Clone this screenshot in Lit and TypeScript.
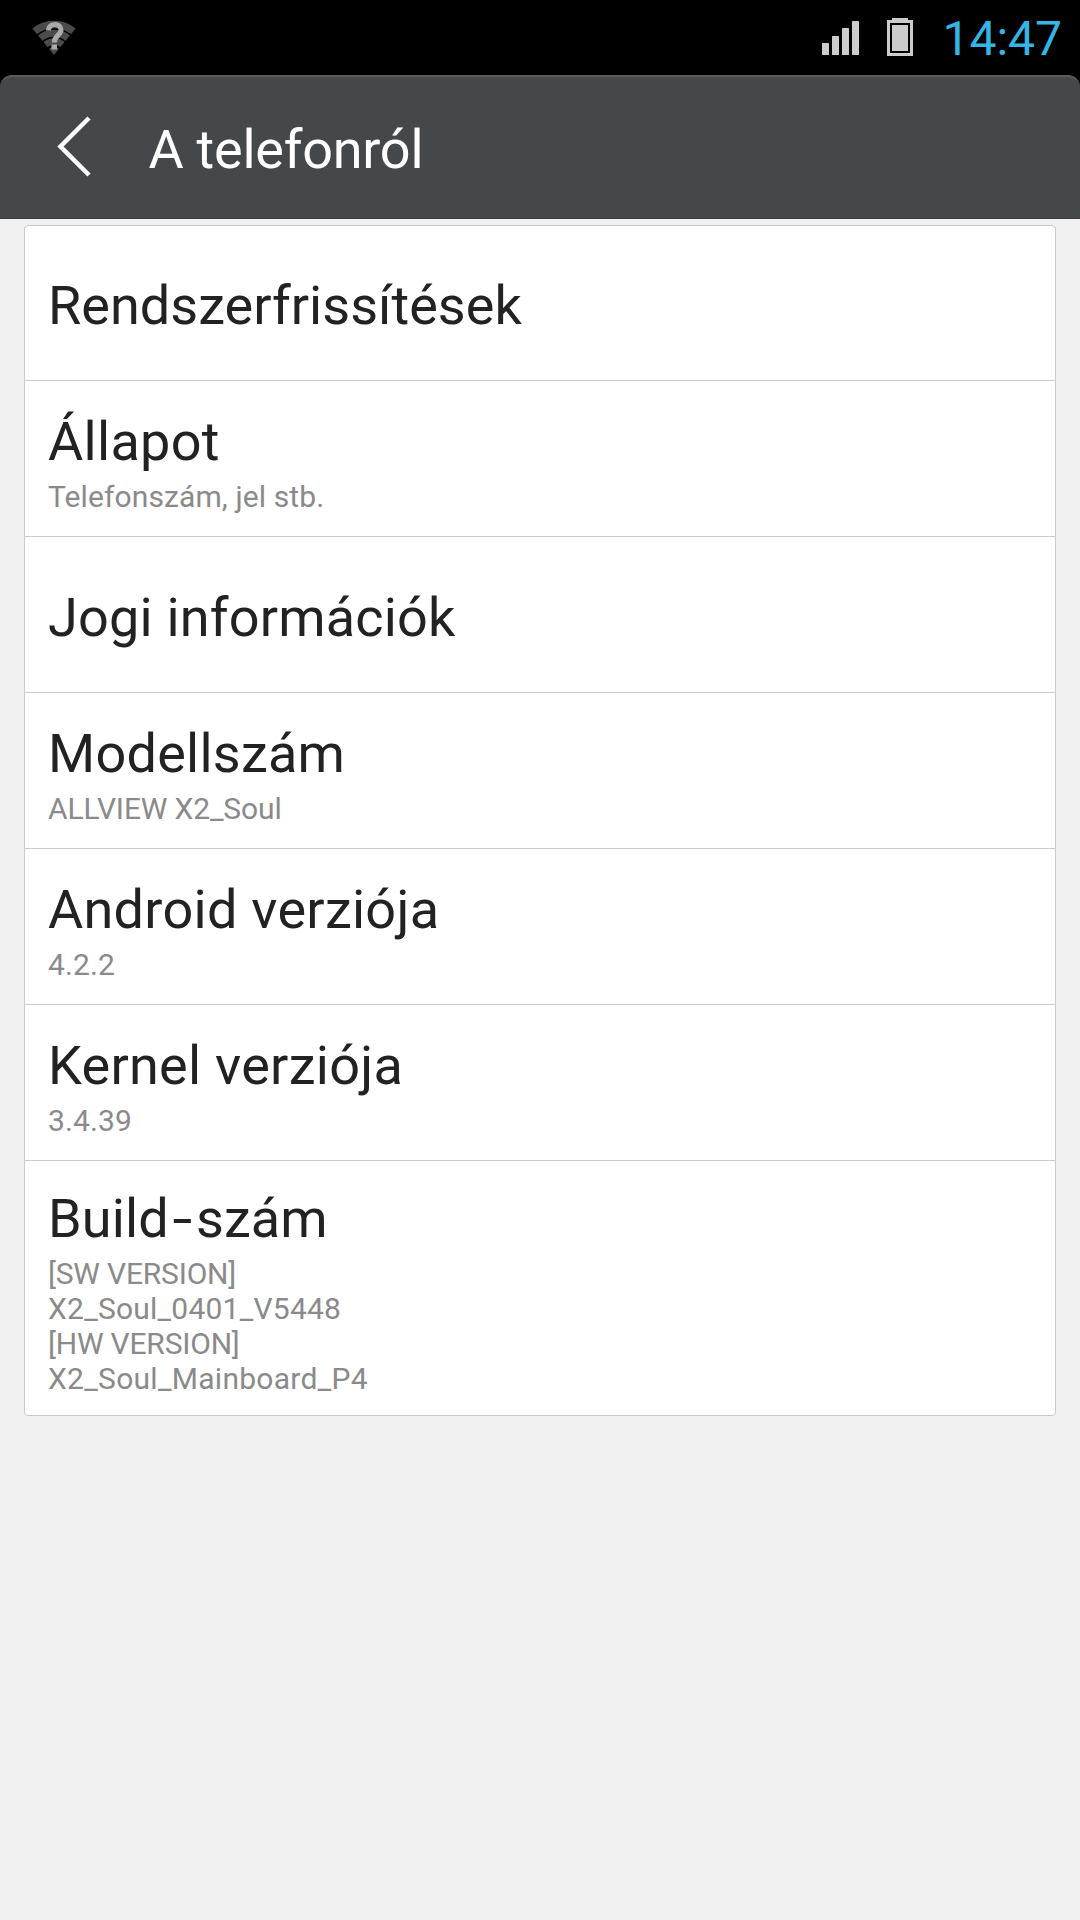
import { LitElement, html, css, svg } from "lit";
import { customElement } from "lit/decorators.js";

/** A run of text with its letter spacing in pixels. */
type Run = [text: string, spacing: number];
interface Row { title: Run; lines: Run[]; }

const ROWS: Row[] = [
  { title: ["Rendszerfrissítések", 0.03], lines: [] },
  { title: ["Állapot", 0.3], lines: [["Telefonszám, jel stb.", 0.11]] },
  { title: ["Jogi információk", 0.19], lines: [] },
  { title: ["Modellszám", 0.25], lines: [["ALLVIEW X2_Soul", -0.14]] },
  { title: ["Android verziója", 0.28], lines: [["4.2.2", 0.1]] },
  { title: ["Kernel verziója", 0.28], lines: [["3.4.39", 0.1]] },
  {
    title: ["Build-szám", 0.15],
    lines: [["[SW VERSION]", -0.2], ["X2_Soul_0401_V5448", 0.23], ["[HW VERSION]", -0.2], ["X2_Soul_Mainboard_P4", 0.28]],
  },
];

@customElement("app-root")
export class AppRoot extends LitElement {
  static styles = css`
    :host { display: block; height: 1920px; background: #f0f0f0; font-family: Roboto, "Noto Sans", sans-serif; }
    .top { background: #000; }
    .status { height: 75px; box-sizing: border-box; display: flex; align-items: center; padding: 0 18px 0 28px; }
    .signal { margin-left: auto; margin-right: 28px; }
    .battery { margin-right: 29px; }
    .clock { margin-top: 3px; color: #33b5e5; font-size: 48px; line-height: 56px; white-space: nowrap; }
    .bar { height: 144px; box-sizing: border-box; display: flex; align-items: center; background: #44484b; border-top: 2px solid #5a5e61; border-bottom: 1px solid #3a3e40; border-radius: 12px 12px 0 0; padding-left: 56px; }
    .back { margin-bottom: 3px; }
    .heading { margin: 4px 0 0 56.5px; font-size: 54px; line-height: 63px; font-weight: 400; letter-spacing: -0.25px; color: #fff; white-space: nowrap; }
    .card { margin: 6px 24px 0; background: #fff; border: 1px solid #c9c9c9; border-radius: 4px; }
    .row { height: 156px; box-sizing: border-box; padding: 29px 23px 0; border-top: 1px solid #c9c9c9; }
    .row:first-child { border-top: 0; height: 154px; padding-top: 48px; }
    .row.single:not(:first-child) { padding-top: 49px; }
    .row.tall { height: 255px; padding-top: 26px; }
    .title { font-size: 54px; line-height: 63px; color: #222; white-space: nowrap; }
    .hyphen { display: inline-block; width: 27px; text-align: center; transform: scaleX(1.32); }
    .lines { margin-top: 6px; }
    .line { font-size: 30px; line-height: 35px; color: #8a8a8a; white-space: nowrap; }
    svg { display: block; flex: none; }
  `;

  private titleText(text: string) {
    const [head, tail] = text.split("-");
    return tail ? html`${head}<span class="hyphen">-</span>${tail}` : text;
  }

  render() {
    return html`
      <div class="top">
        <div class="status">
          <svg class="wifi" width="52" height="75" viewBox="28 0 52 75">
            <clipPath id="w"><path d="M54 55 L32 28 L32 15 H76 V28 Z"/></clipPath>
            <g clip-path="url(#w)" fill="none" stroke="#4b4b4b">
              <circle cx="54" cy="55" r="30.5" stroke-width="7.5"/>
              <circle cx="54" cy="55" r="21.7" stroke-width="7"/>
              <circle cx="54" cy="55" r="13.5" stroke-width="6.5"/>
              <circle cx="54" cy="55" r="4" stroke-width="8"/>
            </g>
            <path d="M48.500 30.500 C48.500 22.500 61 22.500 61 30 C61 35 54.300 35.500 54.300 42.500" fill="none" stroke="#aaa" stroke-width="5"/>
            <rect x="51.500" y="44.500" width="5.500" height="5" fill="#aaa"/>
          </svg>
          <svg class="signal" width="37" height="75" viewBox="822 0 37 75" fill="#ccc">
            ${[[822, 43], [832, 36], [842, 28], [852, 21]].map(([x, y]) => svg`<rect x=${x} y=${y} width="7" height=${55 - y} rx="0.6"/>`)}
          </svg>
          <svg class="battery" width="26" height="75" viewBox="887 0 26 75">
            <path d="M887 20 H892 V18 H908 V20 H913 V56 H887 Z" fill="#ccc"/>
            <rect x="890" y="23" width="20" height="30" fill="#000"/>
            <rect x="892" y="25" width="16" height="26" fill="#ccc"/>
          </svg>
          <div class="clock">14:47</div>
        </div>
        <div class="bar">
          <svg class="back" width="36" height="62" viewBox="56 115 36 62"><path d="M89 118 L60.500 146.500 L89 175" fill="none" stroke="#fff" stroke-width="4.500"/></svg>
          <h1 class="heading">A telefonról</h1>
        </div>
      </div>
      <div class="card">
        ${ROWS.map((r) => html`<div class="row ${r.lines.length === 0 ? "single" : r.lines.length > 1 ? "tall" : ""}">
          <div class="title" style="letter-spacing:${r.title[1]}px">${this.titleText(r.title[0])}</div>
          ${r.lines.length ? html`<div class="lines">${r.lines.map(([text, spacing]) => html`<div class="line" style="letter-spacing:${spacing}px">${text}</div>`)}</div>` : ""}
        </div>`)}
      </div>
    `;
  }
}
